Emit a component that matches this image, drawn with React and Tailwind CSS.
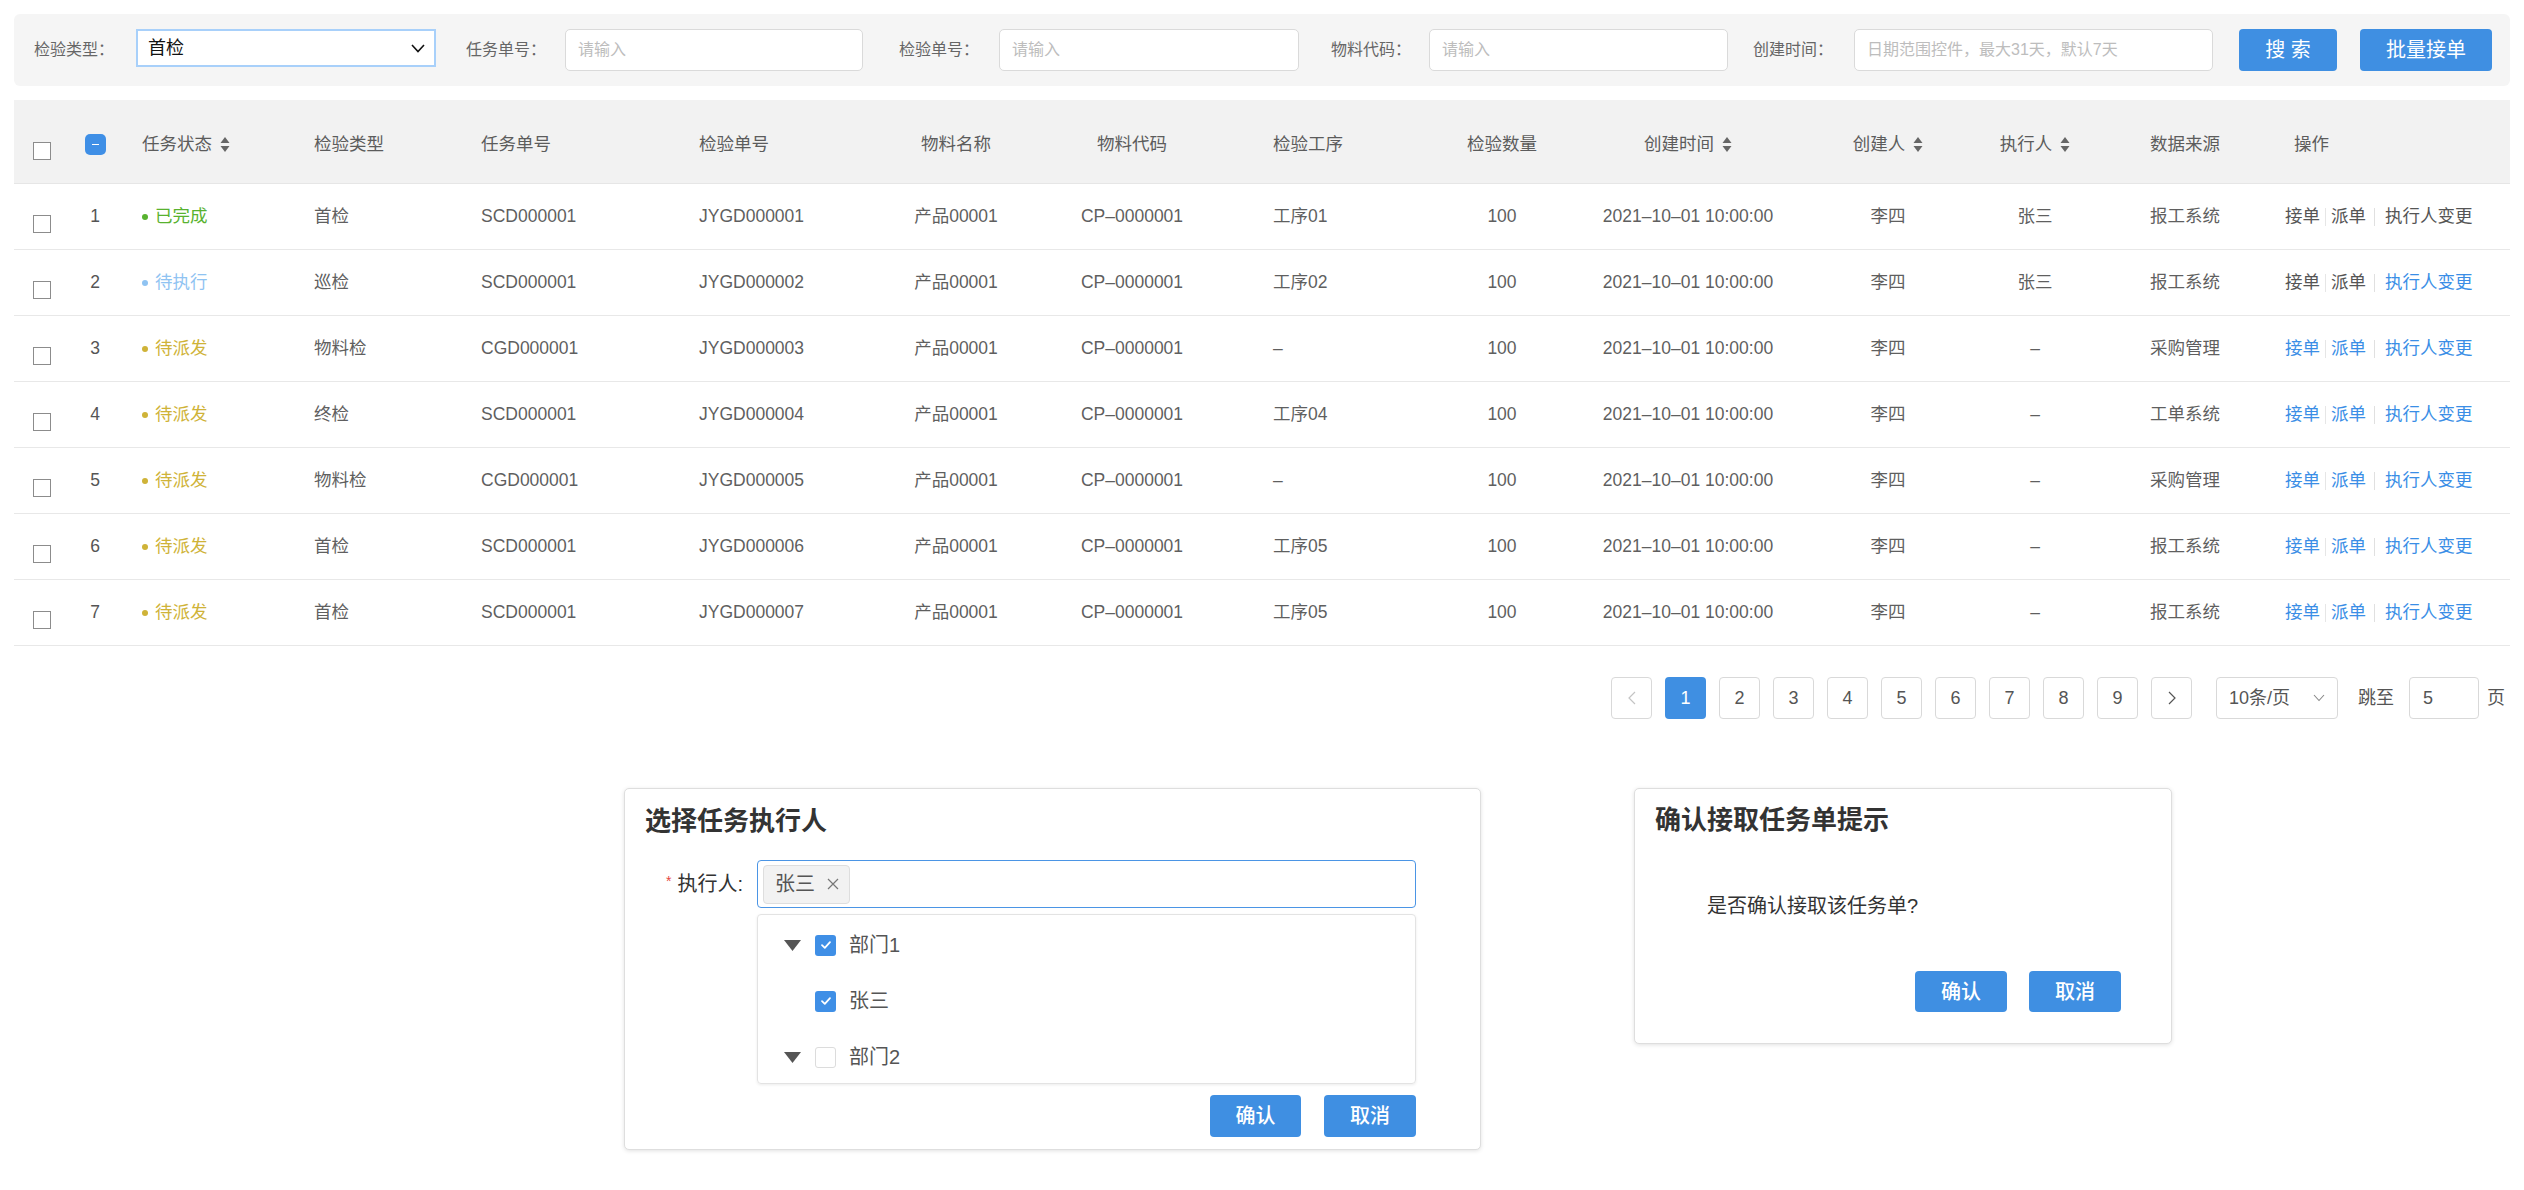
import React from 'react';

const FONT = "font-['Liberation_Sans','Noto_Sans_CJK_SC',sans-serif]";

const GRID =
    'grid grid-cols-[56px_50px_194px_167px_218px_172px_170px_182px_197px_164px_208px_192px_102px_198px_222px]';

const columns = [
    { title: '', cls: 'justify-center' },
    { title: '', cls: 'justify-center' },
    { title: '任务状态', cls: 'pl-[22px]', sort: true },
    { title: '检验类型', cls: '' },
    { title: '任务单号', cls: '' },
    { title: '检验单号', cls: '' },
    { title: '物料名称', cls: 'justify-center' },
    { title: '物料代码', cls: 'justify-center' },
    { title: '检验工序', cls: 'pl-[50px]' },
    { title: '检验数量', cls: 'justify-center' },
    { title: '创建时间', cls: 'justify-center', sort: true },
    { title: '创建人', cls: 'justify-center', sort: true },
    { title: '执行人', cls: 'justify-center', sort: true },
    { title: '数据来源', cls: 'justify-center' },
    { title: '操作', cls: 'pl-[10px]' },
];

const statusStyle = {
    done: { text: '已完成', color: 'text-[#58b22f]', dot: 'bg-[#58b22f]' },
    doing: { text: '待执行', color: 'text-[#8fc3f2]', dot: 'bg-[#8fc3f2]' },
    wait: { text: '待派发', color: 'text-[#cfb338]', dot: 'bg-[#cfb338]' },
};

const rows = [
    { status: 'done', type: '首检', task: 'SCD000001', no: 'JYGD000001', proc: '工序01', exec: '张三', src: '报工系统', ops: 'gray' },
    { status: 'doing', type: '巡检', task: 'SCD000001', no: 'JYGD000002', proc: '工序02', exec: '张三', src: '报工系统', ops: 'mixed' },
    { status: 'wait', type: '物料检', task: 'CGD000001', no: 'JYGD000003', proc: '–', exec: '–', src: '采购管理', ops: 'blue' },
    { status: 'wait', type: '终检', task: 'SCD000001', no: 'JYGD000004', proc: '工序04', exec: '–', src: '工单系统', ops: 'blue' },
    { status: 'wait', type: '物料检', task: 'CGD000001', no: 'JYGD000005', proc: '–', exec: '–', src: '采购管理', ops: 'blue' },
    { status: 'wait', type: '首检', task: 'SCD000001', no: 'JYGD000006', proc: '工序05', exec: '–', src: '报工系统', ops: 'blue' },
    { status: 'wait', type: '首检', task: 'SCD000001', no: 'JYGD000007', proc: '工序05', exec: '–', src: '报工系统', ops: 'blue' },
];

const SortIcon = () => (
    <svg width="10" height="17" viewBox="0 0 10 17" className="ml-[8px]">
        <path d="M5 1 L9.5 7 L0.5 7 Z" fill="#666" />
        <path d="M5 16 L9.5 10 L0.5 10 Z" fill="#666" />
    </svg>
);

const Checkbox = ({ className = '' }) => (
    <span className={`block w-[18px] h-[18px] border-[1.5px] border-[#8c8c8c] bg-white ${className}`} />
);

const TreeCheck = ({ checked }) =>
    checked ? (
        <span className="shrink-0 w-[21px] h-[21px] rounded-[3px] bg-[#3f8fe6] flex items-center justify-center">
            <svg width="12" height="10" viewBox="0 0 12 10">
                <path d="M2 5.2 L4.8 7.8 L10 2.2" stroke="white" strokeWidth="1.8" fill="none" strokeLinecap="round" strokeLinejoin="round" />
            </svg>
        </span>
    ) : (
        <span className="shrink-0 block w-[21px] h-[21px] rounded-[3px] border border-[#dcdcdc] bg-white" />
    );

const Caret = () => (
    <svg width="17" height="13" viewBox="0 0 17 13" className="shrink-0">
        <path d="M0 1 L17 1 L8.5 12 Z" fill="#555" />
    </svg>
);

const Ops = ({ mode }) => {
    const first = mode === 'blue' ? 'text-[#3a8ee6]' : 'text-[#555]';
    const last = mode === 'gray' ? 'text-[#555]' : 'text-[#3a8ee6]';
    return (
        <div className="flex items-center pl-[1px]">
            <span className={first}>接单</span>
            <span className="mx-[5px] w-px h-[18px] bg-[#e6e6e6]" />
            <span className={first}>派单</span>
            <span className="ml-[8px] mr-[10px] w-px h-[18px] bg-[#e0e0e0]" />
            <span className={last}>执行人变更</span>
        </div>
    );
};

const Label = ({ children, className = '' }) => (
    <span className={`shrink-0 h-[42px] flex items-center text-[16px] text-[#666] ${className}`}>{children}</span>
);

const Input = ({ placeholder, className = '' }) => (
    <div className={`shrink-0 h-[42px] bg-white border border-[#dadada] rounded-[5px] flex items-center px-[12px] text-[16px] text-[#bdbdbd] ${className}`}>
        {placeholder}
    </div>
);

const Button = ({ children, className = '' }) => (
    <button className={`shrink-0 bg-[#3f8fe2] text-white rounded-[4px] flex items-center justify-center ${className}`}>{children}</button>
);

const PageBtn = ({ children, active }) => (
    <div
        className={`w-[41px] h-[42px] rounded-[4px] flex items-center justify-center text-[18px] ${
            active ? 'bg-[#3f8fe2] text-white' : 'border border-[#d9d9d9] text-[#555] bg-white'
        }`}
    >
        {children}
    </div>
);

export default function App() {
    return (
        <div className={`w-[2524px] min-h-[1190px] bg-white px-[14px] pt-[14px] ${FONT}`}>
            {/* filter bar */}
            <div className="h-[72px] bg-[#f5f5f5] rounded-[6px] flex items-start pt-[15px] pl-[20px]">
                <Label className="w-[102px]">检验类型：</Label>
                <div className="shrink-0 w-[300px] h-[38px] bg-white border-2 border-[#a8d0fa] flex items-center justify-between pl-[10px] pr-[9px] text-[18px] text-[#111]">
                    <span>首检</span>
                    <svg width="14" height="9" viewBox="0 0 14 9">
                        <path d="M1 1 L7 7.5 L13 1" stroke="#111" strokeWidth="1.6" fill="none" />
                    </svg>
                </div>
                <Label className="ml-[30px] w-[99px]">任务单号：</Label>
                <Input placeholder="请输入" className="w-[298px]" />
                <Label className="ml-[36px] w-[100px]">检验单号：</Label>
                <Input placeholder="请输入" className="w-[300px]" />
                <Label className="ml-[32px] w-[98px]">物料代码：</Label>
                <Input placeholder="请输入" className="w-[299px]" />
                <Label className="ml-[25px] w-[101px]">创建时间：</Label>
                <Input placeholder="日期范围控件，最大31天，默认7天" className="w-[359px]" />
                <Button className="ml-[26px] w-[98px] h-[42px] text-[20px]">搜 索</Button>
                <Button className="ml-[23px] w-[132px] h-[42px] text-[20px]">批量接单</Button>
            </div>

            {/* table */}
            <div className="mt-[14px] text-[17.5px]">
                <div className={`${GRID} h-[84px] bg-[#f2f2f2] border-b border-[#e6e6e6] text-[#5c5c5c]`}>
                    {columns.map((c, i) => (
                        <div key={i} className={`flex items-center pt-[6px] ${c.cls}`}>
                            {i === 0 && <Checkbox className="mt-[12px]" />}
                            {i === 1 && (
                                <span className="w-[21px] h-[21px] rounded-[5px] bg-[#3f8fe6] flex items-center justify-center">
                                    <span className="w-[7px] h-[1.5px] bg-white" />
                                </span>
                            )}
                            {c.title}
                            {c.sort && <SortIcon />}
                        </div>
                    ))}
                </div>
                {rows.map((r, idx) => {
                    const s = statusStyle[r.status];
                    return (
                        <div key={idx} className={`${GRID} h-[66px] border-b border-[#e8e8e8] text-[#5f5f5f]`}>
                            <div className="flex items-center justify-center">
                                <Checkbox className="mt-[14px]" />
                            </div>
                            <div className="flex items-center justify-center text-[#555]">{idx + 1}</div>
                            <div className={`flex items-center pl-[22px] ${s.color}`}>
                                <span className={`w-[6px] h-[6px] rounded-full mr-[7px] ${s.dot}`} />
                                {s.text}
                            </div>
                            <div className="flex items-center">{r.type}</div>
                            <div className="flex items-center">{r.task}</div>
                            <div className="flex items-center">{r.no}</div>
                            <div className="flex items-center justify-center">产品00001</div>
                            <div className="flex items-center justify-center">CP–0000001</div>
                            <div className="flex items-center pl-[50px]">{r.proc}</div>
                            <div className="flex items-center justify-center">100</div>
                            <div className="flex items-center justify-center">2021–10–01 10:00:00</div>
                            <div className="flex items-center justify-center">李四</div>
                            <div className="flex items-center justify-center">{r.exec}</div>
                            <div className="flex items-center justify-center">{r.src}</div>
                            <div className="flex items-center">
                                <Ops mode={r.ops} />
                            </div>
                        </div>
                    );
                })}
            </div>

            {/* pagination */}
            <div className="mt-[31px] flex items-center justify-end pr-[5px] text-[#555]">
                <div className="flex items-center gap-[13px]">
                    <PageBtn>
                        <svg width="8" height="14" viewBox="0 0 8 14">
                            <path d="M7 1 L1 7 L7 13" stroke="#c4c4c4" strokeWidth="1.2" fill="none" />
                        </svg>
                    </PageBtn>
                    {[1, 2, 3, 4, 5, 6, 7, 8, 9].map((n) => (
                        <PageBtn key={n} active={n === 1}>
                            {n}
                        </PageBtn>
                    ))}
                    <PageBtn>
                        <svg width="8" height="14" viewBox="0 0 8 14">
                            <path d="M1 1 L7 7 L1 13" stroke="#555" strokeWidth="1.2" fill="none" />
                        </svg>
                    </PageBtn>
                </div>
                <div className="ml-[24px] w-[122px] h-[42px] border border-[#d9d9d9] rounded-[4px] flex items-center justify-between pl-[12px] pr-[12px] text-[18px]">
                    <span>10条/页</span>
                    <svg width="12" height="8" viewBox="0 0 12 8">
                        <path d="M1 1 L6 6.5 L11 1" stroke="#888" strokeWidth="1.1" fill="none" />
                    </svg>
                </div>
                <span className="ml-[20px] text-[18px]">跳至</span>
                <div className="ml-[15px] w-[70px] h-[42px] border border-[#d9d9d9] rounded-[4px] flex items-center pl-[13px] text-[18px]">5</div>
                <span className="ml-[8px] text-[18px]">页</span>
            </div>

            {/* dialogs */}
            <div className="mt-[69px] flex items-start pl-[610px]">
                <div className="w-[857px] h-[362px] bg-white border border-[#dedede] rounded-[5px] shadow-[0_1px_4px_rgba(0,0,0,0.12)] px-[20px] pt-[14px]">
                    <div className="h-[36px] flex items-center text-[26px] font-bold text-[#333]">选择任务执行人</div>
                    <div className="mt-[21px] flex items-start">
                        <div className="shrink-0 w-[112px] h-[48px] flex items-center justify-end pr-[14px] text-[20px] text-[#333]">
                            <span className="text-[#e5483f] text-[14px] mr-[6px] -mt-[6px]">*</span>
                            执行人:
                        </div>
                        <div className="w-[659px]">
                            <div className="h-[48px] border border-[#4b95e5] rounded-[4px] flex items-center pl-[5px]">
                                <div className="h-[39px] bg-[#f2f2f2] border border-[#dedede] rounded-[4px] flex items-center pl-[11px] pr-[10px] text-[20px] text-[#555]">
                                    张三
                                    <svg width="12" height="12" viewBox="0 0 12 12" className="ml-[12px]">
                                        <path d="M1 1 L11 11 M11 1 L1 11" stroke="#777" strokeWidth="1.2" />
                                    </svg>
                                </div>
                            </div>
                            <div className="mt-[6px] h-[170px] border border-[#e3e3e3] rounded-[4px] shadow-[0_1px_3px_rgba(0,0,0,0.08)] pt-[2px] text-[20px] text-[#555]">
                                <div className="h-[56px] flex items-center pl-[26px]">
                                    <Caret />
                                    <span className="ml-[14px] flex"><TreeCheck checked /></span>
                                    <span className="ml-[13px]">部门1</span>
                                </div>
                                <div className="h-[56px] flex items-center pl-[57px]">
                                    <TreeCheck checked />
                                    <span className="ml-[13px]">张三</span>
                                </div>
                                <div className="h-[56px] flex items-center pl-[26px]">
                                    <Caret />
                                    <span className="ml-[14px] flex"><TreeCheck /></span>
                                    <span className="ml-[13px]">部门2</span>
                                </div>
                            </div>
                            <div className="mt-[11px] flex justify-end gap-[23px]">
                                <Button className="w-[91px] h-[42px] text-[20px] font-medium">确认</Button>
                                <Button className="w-[92px] h-[42px] text-[20px] font-medium">取消</Button>
                            </div>
                        </div>
                    </div>
                </div>

                <div className="ml-[153px] w-[538px] h-[256px] bg-white border border-[#dedede] rounded-[5px] shadow-[0_1px_4px_rgba(0,0,0,0.12)] pl-[20px] pr-[50px] pt-[13px]">
                    <div className="h-[36px] flex items-center text-[26px] font-bold text-[#333]">确认接取任务单提示</div>
                    <div className="mt-[54px] pl-[52px] h-[28px] flex items-center text-[20px] text-[#333]">是否确认接取该任务单?</div>
                    <div className="mt-[51px] flex justify-end gap-[22px]">
                        <Button className="w-[92px] h-[41px] text-[20px] font-medium">确认</Button>
                        <Button className="w-[92px] h-[41px] text-[20px] font-medium">取消</Button>
                    </div>
                </div>
            </div>
        </div>
    );
}
